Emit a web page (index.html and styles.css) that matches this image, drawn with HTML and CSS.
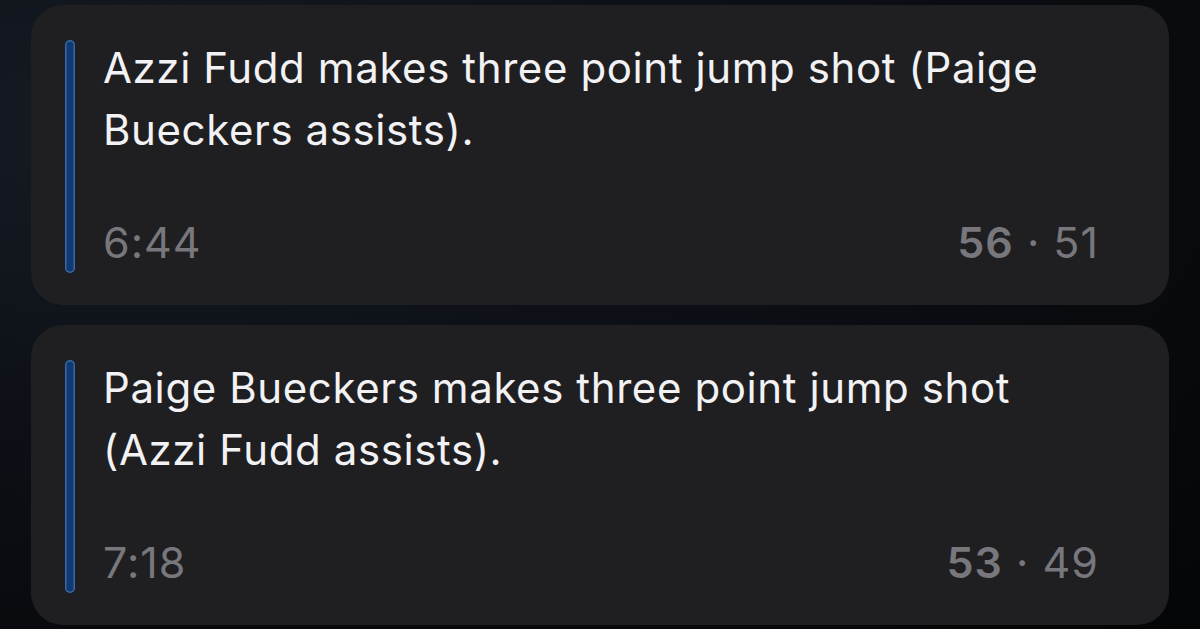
FILE: index.html
```html
<!DOCTYPE html>
<html>
<head>
    <title>Play by Play</title>
    <link rel="stylesheet" href="styles.css">
</head>
<body>
    <div class="feed">
        <div class="play">
            <div class="marker"></div>
            <div class="play-body">
                <p class="play-text">Azzi Fudd makes three point jump shot (Paige Bueckers assists).</p>
                <div class="play-meta">
                    <span class="clock">6:44</span>
                    <span class="score"><b>56</b> · 51</span>
                </div>
            </div>
        </div>
        <div class="play">
            <div class="marker"></div>
            <div class="play-body">
                <p class="play-text">Paige Bueckers makes three point jump shot (Azzi Fudd assists).</p>
                <div class="play-meta">
                    <span class="clock">7:18</span>
                    <span class="score"><b>53</b> · 49</span>
                </div>
            </div>
        </div>
    </div>
</body>
</html>
```

FILE: styles.css
```css
body {
    margin: 0;
    height: 629px;
    overflow: hidden;
    font-family: Inter, "Liberation Sans", sans-serif;
    background: radial-gradient(ellipse at 10% 20%, #161b24 0%, #0c0f15 45%, #040506 100%);
}
.feed {
    padding: 5px 31px 0 31px;
    display: flex;
    flex-direction: column;
    gap: 20px;
}
.play {
    display: flex;
    background-color: #1f1f22;
    border-radius: 32px;
    padding: 35px 70px 32px 34px;
    height: 300px;
    box-sizing: border-box;
}
.marker {
    width: 10px;
    flex-shrink: 0;
    border-radius: 5px;
    background-color: #0f3a74;
    box-shadow: inset 0 0 0 1.5px #3a679f;
}
.play-body {
    flex: 1;
    margin-left: 28px;
    display: flex;
    flex-direction: column;
    justify-content: space-between;
}
.play-text {
    margin: 0;
    margin-top: -3px;
    color: #f2f2f4;
    font-size: 42px;
    line-height: 62px;
    letter-spacing: 0.6px;
}
.play-meta {
    display: flex;
    justify-content: space-between;
    margin-bottom: 7px;
    color: #77777c;
    font-size: 43px;
    line-height: 48px;
    letter-spacing: 1px;
}
.score b {
    font-weight: 600;
}
```
